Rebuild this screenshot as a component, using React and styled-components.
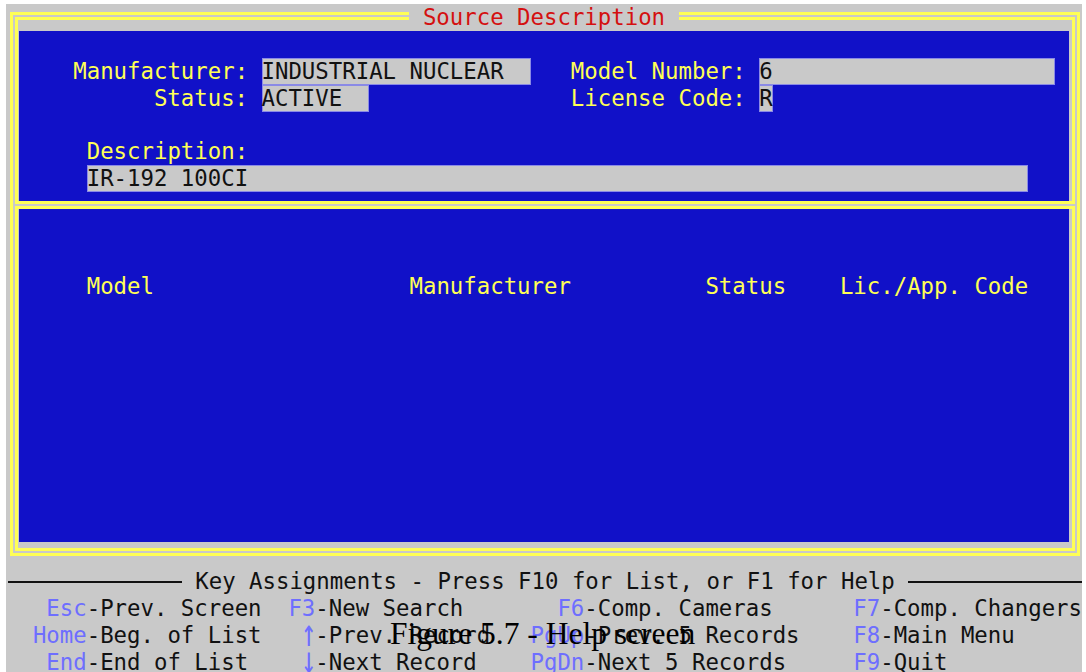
import React from 'react';
import styled, { createGlobalStyle } from 'styled-components';

// text-mode grid: 80 x 25 character cells
const CW = 13.45;
const RH = 26.88;
const cells = (n) => `${(n * CW).toFixed(2)}px`;
const rows = (n) => `${(n * RH).toFixed(2)}px`;

const GRAY = '#c9c9c9';
const BLUE = '#1111c8';
const YELLOW = '#ffff55';
const RED = '#d41010';
const KEY = '#6e6eff';
const INK = '#111';

const GlobalStyle = createGlobalStyle`
  html, body {
    margin: 0;
    padding: 0;
    background: #fff;
    overflow: hidden;
  }
`;

const Screen = styled.div`
  position: relative;
  width: ${cells(80)};
  height: ${rows(25)};
  margin: 4px 0 0 6px;
  background: ${GRAY};
  font-family: 'DejaVu Sans Mono', monospace;
  font-size: 22.35px;
  line-height: ${RH}px;
  white-space: pre;
  color: ${INK};
`;

const Window = styled.div`
  position: relative;
  height: ${rows(21)};
  padding: 0 ${cells(1)} ${rows(1)};
  box-sizing: border-box;

  &::before {
    content: '';
    position: absolute;
    top: 8px;
    left: 4px;
    right: 2px;
    bottom: 12px;
    border: 8px double ${YELLOW};
  }
`;

const TitleBar = styled.div`
  position: relative;
  display: flex;
  justify-content: center;
  height: ${RH}px;
`;

const Title = styled.span`
  padding: 0 ${cells(1)};
  background: ${GRAY};
  color: ${RED};
`;

const Body = styled.div`
  display: flex;
  flex-direction: column;
  height: ${rows(19)};
  background: ${BLUE};
`;

const TopPanel = styled.div`
  height: ${rows(6)};
  padding-top: ${RH}px;
  box-sizing: border-box;
`;

const Form = styled.div`
  display: grid;
  grid-template-columns: ${cells(4)} ${cells(13)} ${cells(1)} ${cells(23)} ${cells(13)} ${cells(1)} ${cells(22)};
  grid-auto-rows: ${RH}px;
`;

const Label = styled.span`
  grid-column: ${(p) => p.col};
  color: ${YELLOW};
  text-align: ${(p) => (p.left ? 'left' : 'right')};
`;

const Field = styled.span`
  grid-column: ${(p) => p.col || 'auto'};
  justify-self: start;
  display: block;
  width: ${(p) => cells(p.size)};
  height: ${RH}px;
  background: ${GRAY};
  box-shadow: inset 0 0 0 1px #8a8ae6;
  color: ${INK};
`;

const DescBlock = styled.div`
  display: flex;
  flex-direction: column;
  margin-top: ${RH}px;
  padding-left: ${cells(5)};
`;

const Divider = styled.div`
  position: relative;
  height: ${RH}px;

  &::before {
    content: '';
    position: absolute;
    top: 9px;
    left: -4.45px;
    right: -6.45px;
    height: 2px;
    border-top: 3px solid ${YELLOW};
    border-bottom: 3px solid ${YELLOW};
    background: ${GRAY};
  }
`;

const ListPanel = styled.div`
  flex: 1;
  padding: ${rows(2)} 0 0 ${cells(5)};
`;

const ListHeader = styled.div`
  display: grid;
  grid-template-columns: ${cells(24)} ${cells(22)} ${cells(10)} auto;
  color: ${YELLOW};
`;

const KeyBar = styled.div`
  display: flex;
  align-items: center;
  height: ${RH}px;
`;

const Rule = styled.div`
  flex: 1;
  height: 2px;
  margin-left: ${(p) => (p.lead ? '2px' : '0')};
  background: ${INK};
`;

const KeyBarText = styled.span`
  padding: 0 ${cells(1)};
`;

const KeyGrid = styled.div`
  display: grid;
  grid-template-columns: ${[6, 12, 5, 16, 4, 20, 2, 15].map(cells).join(' ')};
  grid-auto-rows: ${RH}px;
`;

const KeyName = styled.span`
  color: ${KEY};
  text-align: right;
`;

// the code page arrows fill the whole cell height
const Arrow = styled.span`
  display: inline-block;
  transform: scale(1.15, 1.7);
  transform-origin: 50% 60%;
`;

const KeyAction = styled.span`
  overflow: visible;
`;

const Caption = styled.div`
  position: absolute;
  left: 384px;
  top: 614px;
  font-family: 'Liberation Serif', 'Times New Roman', serif;
  font-size: 31.5px;
  line-height: 1;
  color: #000;
  white-space: nowrap;
`;

const keys = [
  [['Esc', 'Prev. Screen'], ['F3', 'New Search'], ['F6', 'Comp. Cameras'], ['F7', 'Comp. Changers']],
  [['Home', 'Beg. of List'], ['↑', 'Prev. Record'], ['PgUp', 'Prev. 5 Records'], ['F8', 'Main Menu']],
  [['End', 'End of List'], ['↓', 'Next Record'], ['PgDn', 'Next 5 Records'], ['F9', 'Quit']],
];

export default function App() {
  return (
    <>
      <GlobalStyle />
      <Screen>
        <Window>
          <TitleBar>
            <Title>Source Description</Title>
          </TitleBar>
          <Body>
            <TopPanel>
              <Form>
                <Label col={2}>Manufacturer:</Label>
                <Field col={4} size={20}>INDUSTRIAL NUCLEAR</Field>
                <Label col={5}>Model Number:</Label>
                <Field col={7} size={22}>6</Field>
                <Label col={2}>Status:</Label>
                <Field col={4} size={8}>ACTIVE</Field>
                <Label col={5}>License Code:</Label>
                <Field col={7} size={1}>R</Field>
              </Form>
              <DescBlock>
                <Label left>Description:</Label>
                <Field size={70}>IR-192 100CI</Field>
              </DescBlock>
            </TopPanel>
            <Divider />
            <ListPanel>
              <ListHeader>
                <span>Model</span>
                <span>Manufacturer</span>
                <span>Status</span>
                <span>Lic./App. Code</span>
              </ListHeader>
            </ListPanel>
          </Body>
        </Window>
        <KeyBar>
          <Rule lead />
          <KeyBarText>Key Assignments - Press F10 for List, or F1 for Help</KeyBarText>
          <Rule />
        </KeyBar>
        <KeyGrid>
          {keys.flat().map(([k, action]) => (
            <React.Fragment key={k}>
              <KeyName>{k.length === 1 ? <Arrow>{k}</Arrow> : k}</KeyName>
              <KeyAction>-{action}</KeyAction>
            </React.Fragment>
          ))}
        </KeyGrid>
        <Caption>Figure 5.7 - Help screen</Caption>
      </Screen>
    </>
  );
}
